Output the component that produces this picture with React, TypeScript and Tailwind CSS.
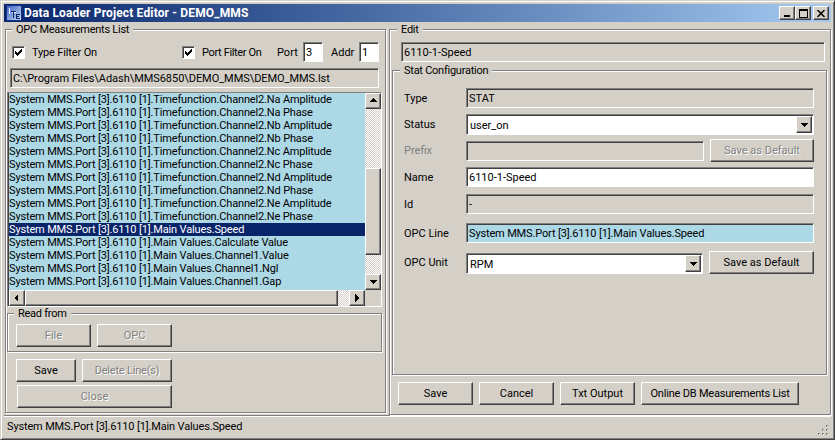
const RAISED = "border border-t-white border-l-white border-r-[#404040] border-b-[#404040] shadow-[inset_-1px_-1px_0_#808080]";
const SUNK = "border border-t-[#808080] border-l-[#808080] border-r-white border-b-white shadow-[inset_1px_1px_0_#404040]";
const GROUP = "relative border border-[#808080] shadow-[inset_1px_1px_0_#fff,1px_1px_0_#fff]";
const DITHER = "bg-[repeating-conic-gradient(#d4d0c8_0_25%,#ffffff_0_50%)] bg-[length:2px_2px]";

function Btn({ children, w, h = 23, disabled, className = "" }: { children: string; w: number; h?: number; disabled?: boolean; className?: string }) {
  return (
    <div style={{ width: w, height: h }} className={`${RAISED} flex shrink-0 items-center justify-center whitespace-nowrap ${className} ${disabled ? "text-[#808080] [text-shadow:1px_1px_0_#fff]" : "text-black"}`}>
      {children}
    </div>
  );
}

function Legend({ children, left = "left-[7px]" }: { children: string; left?: string }) {
  return <span className={`absolute -top-[7px] ${left} bg-[#d4d0c8] px-1 leading-[14px] tracking-[-0.25px]`}>{children}</span>;
}

function Arrow({ dir }: { dir: "up" | "down" | "left" | "right" }) {
  const pts = { up: "4,1 0,5 8,5", down: "0,2 8,2 4,6", left: "5,0 5,8 1,4", right: "2,0 2,8 6,4" }[dir];
  return <svg width="8" height="8" viewBox="0 0 8 8" shapeRendering="crispEdges"><polygon points={pts} fill="#000" /></svg>;
}

function ScrollBtn({ dir }: { dir: "up" | "down" | "left" | "right" }) {
  return <div className={`${RAISED} flex h-4 w-4 shrink-0 items-center justify-center bg-[#d4d0c8]`}><Arrow dir={dir} /></div>;
}

function Check({ className = "" }: { className?: string }) {
  return (
    <div className={`${SUNK} h-[13px] w-[13px] shrink-0 bg-white ${className}`}>
      <svg width="11" height="11" viewBox="0 0 11 11" shapeRendering="crispEdges"><path d="M2 4v3h1v1h1v1h1V8h1V7h1V6h1V5h1V2H8v1H7v1H6v1H5v1H4V5H3V4z" fill="#000" /></svg>
    </div>
  );
}

function Field({ children, w, h = 20, bg = "", className = "" }: { children?: string; w?: number; h?: number; bg?: string; className?: string }) {
  return (
    <div style={{ width: w, height: h }} className={`${SUNK} flex shrink-0 items-center overflow-hidden whitespace-nowrap pl-[2px] ${bg} ${className}`}>
      {children}
    </div>
  );
}

function Row({ label, children, mt, muted }: { label: string; children: React.ReactNode; mt: number; muted?: boolean }) {
  return (
    <div style={{ marginTop: mt }} className="flex items-center">
      <span className={`w-[73px] shrink-0 pl-[11px] ${muted ? "text-[#808080]" : ""}`}>{label}</span>
      {children}
    </div>
  );
}

function Select({ value, w, className = "" }: { value: string; w: number; className?: string }) {
  return (
    <div style={{ width: w }} className={`${SUNK} flex h-[21px] shrink-0 items-center bg-white pl-[3px] pr-[1px] ${className}`}>
      <span className="flex-1 pt-px">{value}</span>
      <div className={`${RAISED} flex h-[17px] w-4 items-center justify-center bg-[#d4d0c8]`}><Arrow dir="down" /></div>
    </div>
  );
}

const LINES = [
  "Timefunction.Channel2.Na Amplitude",
  "Timefunction.Channel2.Na Phase",
  "Timefunction.Channel2.Nb Amplitude",
  "Timefunction.Channel2.Nb Phase",
  "Timefunction.Channel2.Nc Amplitude",
  "Timefunction.Channel2.Nc Phase",
  "Timefunction.Channel2.Nd Amplitude",
  "Timefunction.Channel2.Nd Phase",
  "Timefunction.Channel2.Ne Amplitude",
  "Timefunction.Channel2.Ne Phase",
  "Main Values.Speed",
  "Main Values.Calculate Value",
  "Main Values.Channel1.Value",
  "Main Values.Channel1.Ngl",
  "Main Values.Channel1.Gap",
];

export default function App() {
  return (
    <div className="flex h-[440px] w-[835px] flex-col overflow-hidden border border-t-[#d4d0c8] border-l-[#d4d0c8] border-r-[#404040] border-b-[#404040] bg-[#d4d0c8] p-[3px] pb-[2px] font-['Roboto',sans-serif] text-[11px] leading-none text-black shadow-[inset_1px_1px_0_#fff,inset_-1px_-1px_0_#808080]">
      <div className="flex h-[18px] shrink-0 items-center bg-gradient-to-r from-[#0a246a] to-[#a6caf0] pl-[2px] pr-[2px]">
        <svg width="16" height="16" viewBox="0 0 16 16" className="shrink-0" shapeRendering="crispEdges">
          <defs>
            <linearGradient id="tile" x1="0" y1="0" x2="1" y2="1">
              <stop offset="0" stopColor="#3f67c4" />
              <stop offset="1" stopColor="#c4d6f2" />
            </linearGradient>
          </defs>
          <rect width="16" height="16" fill="#12308c" />
          <rect x="1" y="1" width="14" height="14" fill="url(#tile)" />
          <path d="M3 3h1v6H3z" fill="#fff" />
          <path d="M5 6h5v1H8v6H7V7H5z" fill="#0a246a" />
          <path d="M6 7h1v1H6zM8 7h2v1H8z" fill="#fff" />
          <path d="M10 9h4v1h-3v1h2v1h-2v1h3v1h-4z" fill="#0a246a" />
        </svg>
        <span className="ml-[2px] flex-1 whitespace-nowrap text-[12px] font-bold tracking-[0.15px] text-white">Data Loader Project Editor - DEMO_MMS</span>
        <div className={`${RAISED} flex h-[14px] w-4 items-end justify-center bg-[#d4d0c8] pb-[2px]`}><div className="h-[2px] w-[6px] bg-black" /></div>
        <div className={`${RAISED} flex h-[14px] w-4 items-center justify-center bg-[#d4d0c8]`}><div className="h-[9px] w-[9px] border border-t-2 border-black" /></div>
        <div className={`${RAISED} ml-[2px] flex h-[14px] w-4 items-center justify-center bg-[#d4d0c8]`}>
          <svg width="8" height="7" viewBox="0 0 8 7"><path d="M0.5 0L7.5 7M7.5 0L0.5 7" stroke="#000" strokeWidth="1.5" /></svg>
        </div>
      </div>

      <div className="mt-[7px] flex flex-1 items-start">
        {/* Left column */}
        <div className={`${GROUP} ml-px h-[384px] w-[381px] shrink-0`}>
          <Legend left="left-[6px]">OPC Measurements List</Legend>
          <div className="mt-[15px] flex h-[14px] items-center whitespace-nowrap">
            <Check className="ml-[6px]" />
            <span className="ml-[7px] w-[150px] tracking-[-0.15px]">Type Filter On</span>
            <Check />
            <span className="ml-[7px] w-[75px] tracking-[-0.35px]">Port Filter On</span>
            <span className="w-[26px]">Port</span>
            <Field w={20} bg="bg-white">3</Field>
            <span className="ml-[8px] w-[28px]">Addr</span>
            <Field w={20} bg="bg-white">1</Field>
          </div>
          <Field w={369} h={20} className="ml-[4px] mt-[9px] tracking-[-0.05px]">{"C:\\Program Files\\Adash\\MMS6850\\DEMO_MMS\\DEMO_MMS.lst"}</Field>
          <div className={`${SUNK} ml-px mt-[4px] flex h-[215px] w-[375px] flex-col pl-px`}>
            <div className="flex h-[197px] shrink-0">
              <div className="h-[197px] flex-1 overflow-hidden bg-[#add8e6] tracking-[-0.15px]">
                {LINES.map((l, i) => (
                  <div key={l} className={`flex h-[13px] items-center whitespace-nowrap ${i === 10 ? "bg-[#0a246a] text-white" : ""}`}>
                    {`System MMS.Port [3].6110 [1].${l}`}
                  </div>
                ))}
              </div>
              <div className={`flex w-4 shrink-0 flex-col ${DITHER}`}>
                <ScrollBtn dir="up" />
                <div className="mt-[59px] h-[87px] w-4 shrink-0 bg-[#d4d0c8]"><div className={`${RAISED} h-full w-full`} /></div>
                <div className="flex-1" />
                <ScrollBtn dir="down" />
              </div>
            </div>
            <div className="flex h-4 shrink-0">
              <ScrollBtn dir="left" />
              <div className={`${RAISED} h-4 w-[313px] shrink-0`} />
              <div className={`${DITHER} flex-1`} />
              <ScrollBtn dir="right" />
              <div className="w-4 shrink-0" />
            </div>
          </div>
          <div className={`${GROUP} ml-px mt-[6px] h-[39px] w-[375px] pl-[8px] pt-[10px]`}>
            <Legend left="left-[6px]">Read from</Legend>
            <div className="flex gap-[6px]">
              <Btn w={75} disabled>File</Btn>
              <Btn w={75} disabled>OPC</Btn>
            </div>
          </div>
          <div className="ml-[10px] mt-[7px] flex gap-[6px]">
            <Btn w={60}>Save</Btn>
            <Btn w={90} disabled className="tracking-[-0.2px]">{"Delete Line(s)"}</Btn>
          </div>
          <Btn w={155} disabled className="ml-[11px] mt-[3px]">Close</Btn>
        </div>

        {/* Right column */}
        <div className={`${GROUP} ml-[3px] h-[386px] w-[442px] shrink-0`}>
          <Legend>Edit</Legend>
          <Field w={424} h={20} className="ml-[11px] mt-[12px]">6110-1-Speed</Field>
          <div className={`${GROUP} ml-[2px] mt-[8px] h-[305px] w-[435px]`}>
            <Legend>Stat Configuration</Legend>
            <Row label="Type" mt={17}><Field w={348}>STAT</Field></Row>
            <Row label="Status" mt={6}><Select value="user_on" w={348} /></Row>
            <Row label="Prefix" mt={4} muted>
              <Field w={238} />
              <Btn w={104} disabled className="ml-[6px]">Save as Default</Btn>
            </Row>
            <Row label="Name" mt={5}><Field w={348} bg="bg-white">6110-1-Speed</Field></Row>
            <Row label="Id" mt={7}><Field w={348}>-</Field></Row>
            <Row label="OPC Line" mt={9}><Field w={348} bg="bg-[#add8e6]" className="tracking-[-0.15px]">System MMS.Port [3].6110 [1].Main Values.Speed</Field></Row>
            <Row label="OPC Unit" mt={8}>
              <Select value="RPM" w={237} className="self-end" />
              <Btn w={105} className="ml-[6px]">Save as Default</Btn>
            </Row>
          </div>
          <div className="ml-[8px] mt-[7px] flex gap-[6px]">
            <Btn w={75}>Save</Btn>
            <Btn w={75}>Cancel</Btn>
            <Btn w={75}>Txt Output</Btn>
            <Btn w={158} className="tracking-[-0.2px]">Online DB Measurements List</Btn>
          </div>
        </div>
      </div>

      <div className="flex h-[23px] shrink-0 items-center justify-between border-t border-[#808080] pb-[2px] pl-[3px] pr-[2px] shadow-[inset_0_1px_0_#fff]">
        <span className="tracking-[-0.15px]">System MMS.Port [3].6110 [1].Main Values.Speed</span>
        <svg width="12" height="12" viewBox="0 0 12 12" shapeRendering="crispEdges" className="self-end">
          <path d="M9 1h2v2H9zM5 5h2v2H5zM9 5h2v2H9zM1 9h2v2H1zM5 9h2v2H5zM9 9h2v2H9z" fill="#808080" />
          <path d="M11 3h-1v-1h1zM7 7h-1v-1h1zM11 7h-1v-1h1zM3 11h-1v-1h1zM7 11h-1v-1h1zM11 11h-1v-1h1z" fill="#fff" />
        </svg>
      </div>
    </div>
  );
}
